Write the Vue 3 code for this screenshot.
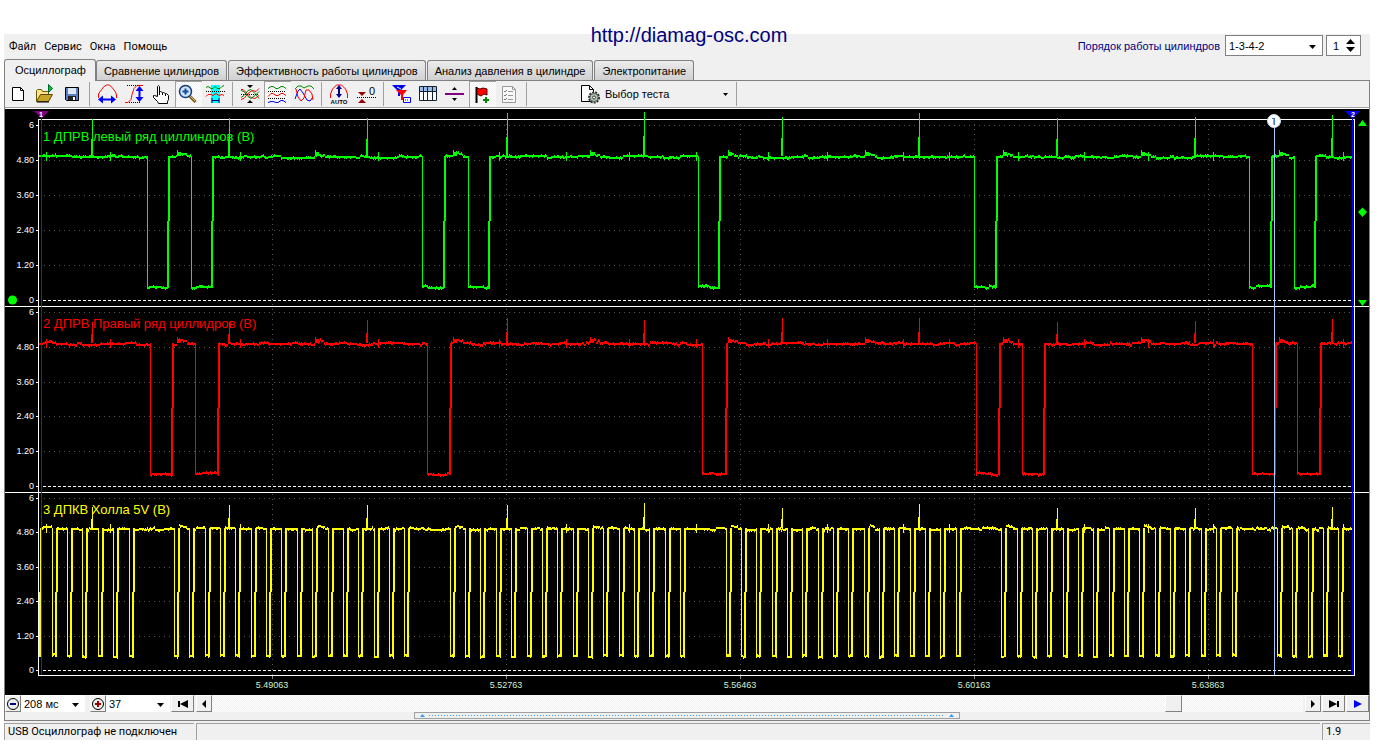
<script setup>
import { ref } from 'vue'

const tabs = ['Осциллограф', 'Сравнение цилиндров', 'Эффективность работы цилиндров', 'Анализ давления в цилиндре', 'Электропитание']
const menu = ['Файл', 'Сервис', 'Окна', 'Помощь']
const order = ref('1-3-4-2')
const cylinder = ref(1)
const timeSpan = ref('208 мс')
const gain = ref('37')
const position = ref(887)

const toolGroups = [
  [
    { name: 'Новый', art: '<path d="M4.5 3.5h8l3 3v10h-11z" fill="#fff" stroke="#000"/><path d="M12.5 3.5v3h3" fill="none" stroke="#000"/>' },
    { name: 'Открыть', art: '<path d="M1.5 17.5v-11l1-1h4l1 2h6v3" fill="#ffe28a" stroke="#6b5a00"/><path d="M1.5 17.5l4-7h12l-4 7z" fill="#c8a428" stroke="#5a4a00"/><path d="M2 18h12" stroke="#000"/><path d="M13.5 .5l4 4-4 4z" fill="#0c2" stroke="#063"/>' },
    { name: 'Сохранить', art: '<path d="M3.5 3.5h13v13h-12l-1-1z" fill="#5b7fc0" stroke="#000"/><path d="M6 4h8v6H6z" fill="#dde6f4"/><path d="M6 12h8v4H6z" fill="#222"/><path d="M11 13h2v3h-2z" fill="#fff"/>' }
  ],
  [
    { name: 'Период', art: '<path d="M1.5 14v-4l2-3 3-4 3-2h3l3 3 3 4 1 3v3" fill="none" stroke="#f00"/><path d="M4 15.5h12" stroke="#00f" stroke-width="2"/><path d="M1 15.5l5-4v8zM19 15.5l-5-4v8z" fill="#00f"/>' },
    { name: 'Уровень', art: '<path d="M1 18.5h3l3-3 1-5 2-6 3-3h6" fill="none" stroke="#f00"/><path d="M3 1.5h13M5 18.5h12" stroke="#000" stroke-dasharray="1 1"/><path d="M15.5 5v10" stroke="#00f" stroke-width="2"/><path d="M15.5 2l4 5h-8zM15.5 18l4-5h-8z" fill="#00f"/>' },
    { name: 'Рука', art: '<path d="M6.5 12.5v-10l1-1 1 1v6l1-1 2 1v1l1-1 2 1v1l1-1 2 2v4l-1 2v2H7.500l-1-2-4-4v-2h1z" fill="#fff" stroke="#000"/><path d="M8.500 8v3M11.500 9v2M14.500 10v2" stroke="#000"/>' },
    { name: 'Масштаб', on: true, art: '<path d="M11.500 12l6 6" stroke="#7a5a18" stroke-width="3"/><path d="M12 12l5 5" stroke="#e0c060"/><circle cx="7.500" cy="7.500" r="6" fill="#cfe4fa" stroke="#123a7a" stroke-width="1.500"/><path d="M7.500 4.500v6M4.500 7.500h6" stroke="#124b9c" stroke-width="2"/>' },
    { name: 'Выделение', art: '<path d="M6 1h9v18H6z" fill="#0ff"/><path d="M1 3.500l2-1 3 2h2l2-2 2 2h3l2-2 2-1" fill="none" stroke="#080"/><path d="M1 7.500h19" stroke="#000" stroke-dasharray="1 1"/><path d="M1 12.500l2-2h3l2 1 3-2 3 2 3-1 2 1" fill="none" stroke="#f00"/><path d="M7 16.500h7M7 14v5M14 14v5" stroke="#008"/>' }
  ],
  [
    { name: 'Синхронизация', art: '<path d="M1 5.500h2l4 4 4 4 4 1 4-3" fill="none" stroke="#f00"/><path d="M1 13.500l3-2 4-5 3-1 4 4 4 5" fill="none" stroke="#080"/><path d="M1 15.500l3-1 4-5 4-3 4 1 3-3" fill="none" stroke="#f00"/><path d="M1 6.500l3 1 4 5 3 2 4-3 4-4" fill="none" stroke="#080"/><path d="M1 10.500h18" stroke="#000" stroke-dasharray="1 1"/><path d="M7 1h6l-3 3zM7 19h6l-3-3z" fill="#000"/>' },
    { name: 'Раздельно', on: true, art: '<path d="M1 4.500l3-2h2l3 2h2l3-2h2l3 2" fill="none" stroke="#080"/><path d="M1 12.500l3-3h2l3 2h2l3-2h2l3 2" fill="none" stroke="#f00"/><path d="M1 18.500l3-1h2l3 1h2l3-2h2l3 2" fill="none" stroke="#00f"/><path d="M1 7.500h18M1 14.500h18" stroke="#000" stroke-dasharray="1 1"/>' },
    { name: 'Совместно', art: '<path d="M1 5l3-3h3l3 2 4-2h3l3 3" fill="none" stroke="#080"/><path d="M1 15l3-8 2-2 3 4 4 7 3 1 3-4" fill="none" stroke="#00f"/><path d="M2 5l2 8 3 4 3-3 2-8h3l3 4 1 6" fill="none" stroke="#f00"/>' }
  ],
  [
    { name: 'Авто', art: '<path d="M1.500 14v-4l2-5 4-4h5l4 4 2 5v4" fill="none" stroke="#f00"/><path d="M10 3v9" stroke="#008" stroke-width="2"/><path d="M10 1l3 4H7zM10 14l3-4H7z" fill="#008"/><text x="10" y="20" font-size="6" font-weight="bold" text-anchor="middle">AUTO</text>' },
    { name: 'Ноль', art: '<path d="M2 8h8l-4 4zM2 19h8l-4-4z" fill="#900"/><path d="M1 13.500h19" stroke="#000" stroke-dasharray="1 1"/><text x="13" y="11" font-size="11">0</text>' }
  ],
  [
    { name: 'Фильтр', art: '<path d="M1 1h14l-6 6v5H7V7z" fill="#00f"/><path d="M5 6h11l-4 5v5h-2v-5z" fill="#f00"/><path d="M6 3l4 2" stroke="#fff"/><path d="M12.500 13.500h7v5h-7z" fill="#fff" stroke="#00f"/><path d="M14 16h4" stroke="#00f" stroke-dasharray="1 1"/>' },
    { name: 'Таблица', art: '<path d="M1.500 2.500h17v14h-17z" fill="#fff" stroke="#123"/><path d="M2 3h16v4H2z" fill="#99bbe5"/><path d="M1.500 7.500h17M5.500 3v13M9.500 3v13M14.500 3v13" stroke="#123"/>' },
    { name: 'Линия', art: '<path d="M0 10h19" stroke="#800080" stroke-width="2"/><path d="M7 6h5L9.500 3zM7 14h5l-2.500 3z" fill="#000"/>' },
    { name: 'Флаг', on: true, art: '<path d="M4.500 3v16" stroke="#000" stroke-width="2"/><path d="M5 4l3 1 3-1 4 1v6l-3-1-3 2-4-2z" fill="#f00" stroke="#500"/><path d="M14 13v6M11 16h6" stroke="#080" stroke-width="2"/>' },
    { name: 'Список', art: '<path d="M3.500 2.500h10l3 3v13h-13z" fill="#f8f8f8" stroke="#999"/><path d="M13.500 2.500v3h3M9 7.500h5M9 11.500h5M9 15.500h5" fill="none" stroke="#999"/><path d="M5 7l1 1 2-2M5 11l1 1 2-2M5 15l1 1 2-2" fill="none" stroke="#777"/>' }
  ]
]

/* ---------- waveforms, in plot units ---------- */
const X0 = 39
const X1 = 1353
const spikes = [92, 229, 367, 507, 644, 782, 919, 1057, 1195, 1332]
const ticks = [46, 110, 240, 378, 499, 566, 629, 696, 768, 827, 903, 949, 1018, 1084, 1148, 1213, 1343]
const bumps = [177, 315, 453, 590, 728, 865, 1003, 1141, 1279]

function random(seed) {
  let s = seed
  return () => {
    s = (s * 48271) % 2147483647
    return s / 2147483647
  }
}
const box = (x, y, w, h) => `M${x} ${y}h${w}v${h}h${-w}z`

function trace(high, low, pulses, tops, seed) {
  const rnd = random(seed * 7919)
  let d = ''
  let drift = 0
  for (let x = X0; x < X1; x++) {
    const inside = pulses.find(([a, b]) => x >= a && x <= b)
    if (rnd() < 0.18) drift = rnd() < 0.55 ? 0 : rnd() < 0.5 ? -1 : 1
    let y = (inside ? low : high) + drift
    const bump = !inside && bumps.find((b) => x >= b && x < b + 10)
    if (bump) y -= x - bump < 6 ? 3 : 2
    if (x < 56) y -= 1
    const r = rnd()
    d += box(x, r < 0.18 ? y - 1 : y, 1, r > 0.82 || r < 0.18 ? 3 : 2)
  }
  const free = (x) => !pulses.some(([a, b]) => x >= a && x <= b)
  ticks.filter(free).forEach((x) => { d += box(x, high - 4, 1, 9) })
  bumps.filter(free).forEach((x) => { d += box(x, high - 6, 1, 6) + box(x + 1, high - 4, 3, 4) })
  spikes.forEach((x, i) => {
    const top = tops[i]
    d += box(x, top, 1, high - top)
    const mid = Math.round(top + (high - top) * 0.55)
    d += box(x - 1, mid, 1, high - mid)
  })
  const half = Math.round((high + low) / 2)
  pulses.forEach(([a, b]) => {
    if (a > X0) d += box(a, high, 1, low - high + 2)
    d += box(b - 1, half, 2, low - half + 2)
    d += box(b, high, 2, half - high)
  })
  return d
}

const toothPulses = [[38, 40]]
for (let g = 0; g < 6; g++) {
  for (let i = 0; i < 16; i++) {
    const x = Math.round(174 + (g - 1) * 275.75 + i * 15.35)
    if (x > 45 && x < 1346) toothPulses.push([x, x + 4])
  }
}

const channels = [
  {
    title: '1 ДПРВ левый ряд циллиндров (В)', color: '#00ff00', base: 141, zero: 300,
    levels: [125, 160, 195, 230, 265],
    path: trace(156, 286, [[147, 168], [191, 212], [422, 444], [468, 489], [698, 719], [974, 996], [1249, 1271], [1294, 1315]], [119, 118, 118, 113, 112, 117, 113, 118, 117, 115], 7)
  },
  {
    title: '2 ДПРВ Правый ряд циллидров (В)', color: '#ff0000', base: 328, zero: 486,
    levels: [312, 347, 382, 416, 451],
    path: trace(343, 473, [[150, 172], [195, 218], [427, 450], [702, 726], [976, 999], [1022, 1044], [1252, 1275], [1297, 1320]], [322, 322, 320, 318, 320, 318, 318, 322, 321, 319], 23)
  },
  {
    title: '3 ДПКВ Холла 5V (В)', color: '#ffff00', base: 514, zero: 670,
    levels: [498, 532, 567, 601, 636],
    path: trace(528, 655, toothPulses, [507, 505, 505, 505, 503, 508, 504, 508, 508, 507], 41)
  }
]
const levelNames = ['6', '4.80', '3.60', '2.40', '1.20']
const times = [
  { x: 272, label: '5.49063' },
  { x: 506, label: '5.52763' },
  { x: 740, label: '5.56463' },
  { x: 974, label: '5.60163' },
  { x: 1208, label: '5.63863' }
]
</script>

<template>
  <div class="page">
    <a class="site" href="http://diamag-osc.com">http://diamag-osc.com</a>
    <main class="window">
      <header class="top">
        <nav class="menu">
          <button v-for="m in menu" :key="m" type="button">{{ m }}</button>
        </nav>
        <div class="order">
          <label for="order">Порядок работы цилиндров</label>
          <span class="drop framed">
            <select id="order" v-model="order"><option>1-3-4-2</option></select>
            <svg class="caret" viewBox="0 0 7 4"><path d="M0 0h7L3.500 4z" /></svg>
          </span>
          <span class="spin">
            <input v-model="cylinder" type="number" aria-label="Цилиндр" />
            <span class="steps">
              <button type="button" aria-label="Больше"><svg viewBox="0 0 9 5"><path d="M0 5h9L4.500 0z" /></svg></button>
              <button type="button" aria-label="Меньше"><svg viewBox="0 0 9 5"><path d="M0 0h9L4.500 5z" /></svg></button>
            </span>
          </span>
        </div>
      </header>

      <div class="tabs" role="tablist">
        <button v-for="(t, i) in tabs" :key="t" type="button" role="tab" :aria-selected="i === 0" :class="{ active: i === 0 }">{{ t }}</button>
      </div>

      <section class="panel">
        <div class="toolbar">
          <template v-for="(g, gi) in toolGroups" :key="gi">
            <button v-for="b in g" :key="b.name" class="tool" :class="{ on: b.on }" type="button" :aria-label="b.name">
              <svg viewBox="0 0 20 20" v-html="b.art"></svg>
            </button>
            <span class="sep"></span>
          </template>
          <button class="test" type="button">
            <svg class="test-icon" viewBox="0 0 20 20">
              <path d="M1.500 1.500h8l4 4v12h-12z" fill="#fff" stroke="#000" />
              <path d="M9.500 1.500v4h4" fill="none" stroke="#000" />
              <circle cx="14" cy="13.500" r="5" fill="#b8ccb8" stroke="#333" stroke-width="2" stroke-dasharray="2 1" />
              <circle cx="14" cy="13.500" r="4" fill="#b8ccb8" stroke="#566" />
              <circle cx="14" cy="13.500" r="1.500" fill="#fff" stroke="#333" />
            </svg>
            <span>Выбор теста</span>
            <svg class="test-caret" viewBox="0 0 5 3"><path d="M0 0h5L2.500 3z" /></svg>
          </button>
          <span class="sep"></span>
        </div>

        <svg class="plot" viewBox="5 109 1364 586" role="img" aria-label="Осциллограмма">
          <rect x="5" y="109" width="1364" height="586" fill="#000" />
          <g class="lines">
            <g stroke="#555" stroke-dasharray="1 4">
              <path v-for="t in times" :key="t.x" :d="`M${t.x}.5 124V675`" />
              <template v-for="c in channels" :key="c.zero">
                <path v-for="y in c.levels" :key="y" :d="`M44 ${y}.5H1353`" />
              </template>
            </g>
            <path v-for="c in channels" :key="c.zero" :d="`M43 ${c.zero}.5H1353`" stroke="#fff" stroke-dasharray="3 2" />
            <path d="M38.500 119.500H1354.500V675.500H38.500z" fill="none" stroke="#fff" />
            <path d="M5 306.500H1369M5 492.500H1369" stroke="#fff" />
            <template v-for="c in channels" :key="c.zero">
              <path v-for="y in [...c.levels, c.zero]" :key="y" :d="`M36 ${y}.5H38`" stroke="#fff" />
            </template>
            <path v-for="t in times" :key="t.x" :d="`M${t.x}.5 676V679`" stroke="#888" />
          </g>
          <g class="scale">
            <template v-for="c in channels" :key="c.zero">
              <text v-for="(y, i) in c.levels" :key="y" x="34" :y="y + 3" text-anchor="end">{{ levelNames[i] }}</text>
              <text x="34" :y="c.zero + 3" text-anchor="end">0</text>
            </template>
            <text v-for="t in times" :key="t.x" :x="t.x" y="688" text-anchor="middle" class="time">{{ t.label }}</text>
          </g>
          <path v-for="c in channels" :key="c.zero" :d="c.path" :fill="c.color" class="lines" />
          <text v-for="c in channels" :key="c.zero" x="43" :y="c.base" :fill="c.color" class="title">{{ c.title }}</text>
          <path d="M41.500 118V675" stroke="#800080" class="lines" />
          <path d="M1274.500 128V675" stroke="#a0c8f8" class="lines" />
          <path d="M1352.500 118V675" stroke="#00f" class="lines" />
          <path d="M34 111H49L41.500 118.500z" fill="#800080" />
          <path d="M1345 111H1360L1352.500 118.500z" fill="#00f" />
          <text x="41" y="117" class="mark">1</text>
          <text x="1353" y="117" class="mark">2</text>
          <circle cx="1274" cy="121" r="6.500" fill="#fff" stroke="#c8dcf8" />
          <path d="M1274 118h1v7h-1zM1272 118h2v1h-2z" fill="#3a78c8" />
          <path d="M1273 119h1v6h-1z" fill="#e0a060" />
          <g fill="#0f0">
            <circle cx="12.500" cy="300" r="4.500" />
            <path d="M1358 126H1367L1362.500 120zM1358 300H1367L1362.500 306zM1358 212L1362.500 207.500L1367 212L1362.500 217z" />
          </g>
        </svg>

        <div class="controls">
          <button class="btn zoomer" type="button" aria-label="Уменьшить">
            <svg viewBox="0 0 14 14"><circle cx="7" cy="7" r="5.500" fill="#eee" stroke="#000" /><path d="M4 7h6" stroke="#008" stroke-width="2" /></svg>
          </button>
          <span class="drop span-a">
            <select v-model="timeSpan" aria-label="Развёртка"><option>208 мс</option></select>
            <svg class="caret" viewBox="0 0 7 4"><path d="M0 0h7L3.500 4z" /></svg>
          </span>
          <button class="btn zoomer second" type="button" aria-label="Увеличить">
            <svg viewBox="0 0 14 14"><circle cx="7" cy="7" r="5.500" fill="#eee" stroke="#000" /><path d="M4 7h6M7 4v6" stroke="#900" stroke-width="2" /></svg>
          </button>
          <span class="drop span-a">
            <select v-model="gain" aria-label="Усиление"><option>37</option></select>
            <svg class="caret" viewBox="0 0 7 4"><path d="M0 0h7L3.500 4z" /></svg>
          </span>
          <button class="btn wide" type="button" aria-label="В начало"><svg viewBox="0 0 12 10"><path d="M1 2h2v6H1zM11 1v8L3 5z" /></svg></button>
          <button class="btn" type="button" aria-label="Назад"><svg viewBox="0 0 12 10"><path d="M8 1v8L4 5z" /></svg></button>
          <input v-model="position" class="scroll" type="range" min="0" max="1000" aria-label="Прокрутка" />
          <button class="btn" type="button" aria-label="Вперёд"><svg viewBox="0 0 12 10"><path d="M4 1v8l4-4z" /></svg></button>
          <button class="btn wide" type="button" aria-label="В конец"><svg viewBox="0 0 12 10"><path d="M9 2h2v6H9zM1 1v8l8-4z" /></svg></button>
          <button class="btn wide" type="button" aria-label="Пуск"><svg viewBox="0 0 12 10"><path d="M2 1v8l8-4z" fill="#00f" /></svg></button>
        </div>

        <div class="splitter">
          <svg viewBox="0 0 5 3"><path d="M0 3h5L2.500 0z" /></svg>
          <i></i>
          <svg viewBox="0 0 5 3"><path d="M0 3h5L2.500 0z" /></svg>
        </div>
      </section>

      <footer class="status">
        <span class="device">USB Осциллограф не подключен</span>
        <span class="message"></span>
        <span class="version">1.9</span>
      </footer>
    </main>
  </div>
</template>

<style>
body {
  background: #fff;
}
</style>

<style scoped>
.page {
  position: relative;
  padding: 34px 12px 0 4px;
  font: 11px/14px "Liberation Sans", Arial, sans-serif;
  color: #000;
}
.page * {
  box-sizing: border-box;
}
button,
select,
input {
  font: inherit;
  color: inherit;
  margin: 0;
  padding: 0;
  border: 0;
  background: none;
  border-radius: 0;
}
.site {
  position: absolute;
  top: 23px;
  left: 0;
  right: 4px;
  width: max-content;
  margin: 0 auto;
  font-size: 20px;
  line-height: 24px;
  color: #000080;
  text-decoration: none;
}
.window {
  background: #f0f0f0;
}
.top {
  display: flex;
  justify-content: space-between;
  height: 25px;
}
.menu {
  display: flex;
  align-items: center;
  gap: 8px;
  padding-left: 5px;
  font-family: Roboto, sans-serif;
}
.order {
  display: flex;
  align-items: center;
  padding: 1px 9px 3px 0;
}
.order label {
  color: #000080;
  margin-right: 5px;
}
.drop {
  position: relative;
  display: block;
  background: #fff;
}
.drop.framed {
  width: 98px;
  height: 21px;
  border: 1px solid #808080;
}
.drop select {
  appearance: none;
  display: block;
  width: 100%;
  height: 100%;
  padding-left: 3px;
}
.caret {
  position: absolute;
  right: 6px;
  top: 50%;
  width: 7px;
  height: 4px;
  margin-top: -1px;
  pointer-events: none;
}
.spin {
  display: flex;
  width: 35px;
  height: 21px;
  margin-left: 3px;
  border: 1px solid #808080;
  background: #fff;
}
.spin input {
  width: 19px;
  padding-left: 6px;
  appearance: textfield;
}
.spin input::-webkit-inner-spin-button {
  appearance: none;
}
.steps {
  display: flex;
  flex-direction: column;
  justify-content: center;
  gap: 3px;
}
.steps button,
.steps svg {
  display: block;
  width: 9px;
  height: 5px;
}
.tabs {
  display: flex;
  align-items: flex-end;
  gap: 1px;
  height: 21px;
}
.tabs button {
  height: 20px;
  padding: 0 7px;
  border: 1px solid #808080;
  border-bottom: 0;
  border-radius: 3px 3px 0 0;
  background: linear-gradient(#ececec, #d0d0d0);
  white-space: nowrap;
}
.tabs button.active {
  position: relative;
  height: 22px;
  margin: 0 -1px -1px 0;
  padding: 0 9px 2px 10px;
  background: #f0f0f0;
}
.panel {
  border: 1px solid #808080;
}
.toolbar {
  display: flex;
  height: 28px;
  border-bottom: 1px solid #fff;
  box-shadow: inset 0 -1px #a0a0a0;
}
.tool {
  flex: none;
  width: 27px;
  height: 26px;
  padding: 3px 4px 3px 3px;
}
.tool svg {
  display: block;
  width: 20px;
  height: 20px;
  font-family: "Liberation Sans", Arial, sans-serif;
}
.tool.on {
  border: 1px solid #a0a0a0;
  border-width: 1px 0 0 1px;
  padding: 2px 4px 3px 2px;
  background: repeating-conic-gradient(#fff 0 25%, #f0f0f0 0 50%) 0 0 / 2px 2px;
}
.sep {
  flex: none;
  width: 8px;
  height: 25px;
  background: linear-gradient(#a0a0a0, #a0a0a0) 3px 1px / 1px 24px no-repeat;
}
.test {
  display: flex;
  align-items: center;
  width: 202px;
  height: 26px;
  padding-left: 49px;
}
.test-icon {
  width: 20px;
  height: 20px;
  margin-right: 5px;
}
.test-caret {
  width: 5px;
  height: 3px;
  margin: 1px 5px 0 auto;
}
.plot {
  display: block;
  width: 100%;
  font-family: "Liberation Sans", Arial, sans-serif;
}
.lines {
  shape-rendering: crispEdges;
}
.scale {
  font-size: 9px;
  fill: #fff;
}
.time {
  fill: #d0f0d0;
}
.title {
  font-size: 13px;
}
.mark {
  font-size: 7px;
  font-weight: bold;
  fill: #fff;
  text-anchor: middle;
}
.controls {
  display: flex;
  height: 17px;
}
.btn {
  flex: none;
  display: flex;
  align-items: center;
  justify-content: center;
  width: 16px;
  height: 17px;
  margin-left: 2px;
  border: 1px solid #fff;
  border-right-color: #808080;
  border-bottom-color: #808080;
  background: #f0f0f0;
}
.btn svg {
  flex: none;
  width: 12px;
  height: 10px;
}
.btn.wide {
  width: 23px;
  margin-left: 1px;
}
.btn.zoomer {
  margin-left: 0;
}
.btn.zoomer.second {
  margin-left: 5px;
}
.btn.zoomer svg {
  width: 14px;
  height: 14px;
}
.span-a {
  width: 64px;
  height: 17px;
}
.scroll {
  appearance: none;
  flex: 1;
  min-width: 0;
  height: 17px;
  background: repeating-conic-gradient(#fff 0 25%, #f0f0f0 0 50%) 0 0 / 2px 2px;
}
.scroll::-webkit-slider-thumb {
  appearance: none;
  width: 17px;
  height: 17px;
  border: 1px solid #fff;
  border-right-color: #808080;
  border-bottom-color: #808080;
  background: #f0f0f0;
}
.splitter {
  display: flex;
  align-items: center;
  gap: 4px;
  width: 40%;
  height: 7px;
  margin: 0 auto 1px;
  padding: 0 5px;
  border: 1px solid #a0a0a0;
}
.splitter svg {
  width: 5px;
  height: 3px;
  fill: #3399ff;
}
.splitter i {
  flex: 1;
  height: 1px;
  background: repeating-linear-gradient(90deg, #3399ff 0 1px, transparent 1px 3px);
}
.status {
  display: flex;
  gap: 2px;
  padding-top: 2px;
  font-family: Roboto, sans-serif;
}
.status span {
  height: 17px;
  padding-left: 3px;
  border: 1px solid #a0a0a0;
  border-width: 1px 0 0 1px;
  line-height: 15px;
}
.status .device {
  width: 190px;
}
.status .message {
  flex: 1;
}
.status .version {
  width: 48px;
}
</style>
